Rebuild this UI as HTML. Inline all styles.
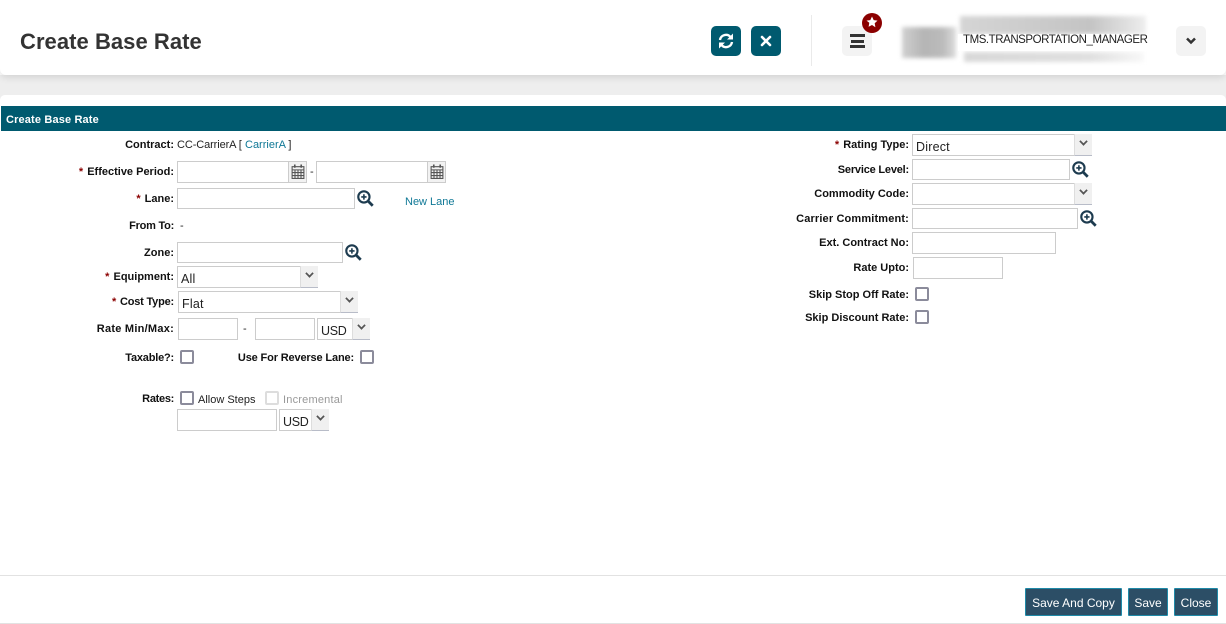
<!DOCTYPE html>
<html><head><meta charset="utf-8">
<style>
html,body{margin:0;padding:0;width:1226px;height:624px;overflow:hidden;background:#fff;font-family:"Liberation Sans",sans-serif;color:#222}
.a,.l,.t,.i,.s,.c,.btn,svg{position:absolute}
.hdr{left:0;top:0;width:1226px;height:75px;background:#fff;border-radius:0 0 6px 6px;box-shadow:0 2px 8px rgba(0,0,0,.13);z-index:2}
.l{font-weight:bold;font-size:11px;letter-spacing:0;color:#111;white-space:nowrap;line-height:14px;margin-top:1px}
.l b{color:#8b0000;margin-right:1px}
.t{font-size:11px;letter-spacing:0;color:#222;white-space:nowrap;line-height:14px;margin-top:1px}
.i,.s{box-sizing:border-box;border:1px solid #ccc;background:#fff;border-width:1px}
.s{font-size:12.5px;letter-spacing:.2px;color:#222;padding-left:3px;line-height:23px}
.s i{position:absolute;right:-1px;top:-1px;bottom:-1px;width:18px;background:#f0f0f0;border-left:1px solid #ddd;border-bottom:1px solid #b8bcc8;box-sizing:border-box}
.s i:after{content:"";position:absolute;left:5px;top:4px;width:5px;height:5px;border:solid #555;border-width:0 2px 2px 0;transform:rotate(45deg) scale(.85)}
.u{letter-spacing:-.3px}
.cal{position:absolute;right:0;top:0;bottom:0;width:17px;background:#f2f2f2;border-left:1px solid #ccc}
.c{box-sizing:border-box;width:14px;height:14px;border:2px solid #8b8b9b;border-radius:2px;background:#fff}
.sq{box-sizing:border-box;width:30px;height:30px;border-radius:5px;position:absolute;top:26px}
.btn{box-sizing:border-box;top:588px;height:28px;background:#2c4e66;border:1px solid #1f8aa8;color:#fff;font-size:12px;letter-spacing:0;line-height:28px;text-align:center;border-radius:1px}
a{color:#0f7896;text-decoration:none}
</style></head><body>
<div class="a" style="left:0;top:75px;width:1226px;height:30px;background:#eeeeee"></div>
<div class="a" style="left:0;top:95px;width:1226px;height:529px;background:#fff;border-radius:5px 5px 0 0"></div>
<div class="a hdr"></div>
<div class="a" style="left:1px;top:106px;width:1225px;height:25px;background:#005a6f"></div>
<div class="a" style="left:6px;top:113px;color:#fff;font-weight:bold;font-size:11px;letter-spacing:.15px;line-height:14px;z-index:3">Create Base Rate</div>

<div style="position:absolute;left:0;top:0;width:1226px;height:75px;z-index:3">
<div class="a" style="left:20px;top:28px;font-size:22px;font-weight:bold;color:#333;letter-spacing:.05px;line-height:28px;white-space:nowrap">Create Base Rate</div>
<div class="sq" style="left:711px;background:#005a6f"></div>
<svg style="left:717px;top:32px" width="18" height="18" viewBox="0 0 18 18" fill="none" stroke="#fff" stroke-width="2.400"><path d="M3 8a6 6 0 0 1 10.500-3L15 6.500"/><path d="M16 1.500v6h-6" fill="#fff" stroke="none"/><path d="M15 10a6 6 0 0 1-10.500 3L3 11.500"/><path d="M2 16.500v-6h6" fill="#fff" stroke="none"/></svg>
<div class="sq" style="left:751px;background:#005a6f"></div>
<svg style="left:760px;top:35px" width="12" height="12" viewBox="0 0 12 12" stroke="#fff" stroke-width="2.600" stroke-linecap="round"><path d="M2 2l8 8M10 2l-8 8"/></svg>
<div class="a" style="left:811px;top:15px;width:1px;height:51px;background:#eaeaea"></div>
<div class="sq" style="left:842px;background:#f3f3f3"></div>
<div class="a" style="left:850px;top:34px;width:15px;height:3px;background:#333"></div>
<div class="a" style="left:851px;top:40px;width:13px;height:3px;background:#333"></div>
<div class="a" style="left:850px;top:45px;width:15px;height:3px;background:#333"></div>
<div class="a" style="left:862px;top:13px;width:20px;height:20px;border-radius:50%;background:#8b0000"></div>
<svg style="left:866px;top:16px" width="12" height="12" viewBox="0 0 24 24"><path fill="#fff" d="M12 1l3.400 7.200 7.600 1-5.600 5.400 1.400 7.800L12 18l-6.800 3.400 1.400-7.800L1 9.200l7.600-1z"/></svg>
<div class="a" style="left:902px;top:27px;width:54px;height:31px;background:linear-gradient(90deg,#d0d0d0,#b5b5b5 40%,#bbb 75%,#dcdcdc);filter:blur(2px)"></div>
<div class="a" style="left:960px;top:16px;width:186px;height:18px;background:linear-gradient(90deg,#d5d5d5,#c4c4c4 70%,#eee);filter:blur(2px)"></div>
<div class="a" style="left:964px;top:52px;width:180px;height:10px;background:linear-gradient(90deg,#d8d8d8,#e0e0e0 70%,#f8f8f8);filter:blur(2px)"></div>
<div class="a" style="left:958px;top:34px;width:195px;height:17px;background:#fff"></div>
<div class="a" style="left:963px;top:33px;font-size:11.5px;letter-spacing:-.45px;line-height:14px;color:#222;white-space:nowrap">TMS.TRANSPORTATION_MANAGER</div>
<div class="sq" style="left:1176px;background:#f3f3f3"></div>
<svg style="left:1185px;top:37px" width="12" height="8" viewBox="0 0 12 8" fill="none" stroke="#333" stroke-width="2.500"><path d="M2 1.500l4 4 4-4"/></svg>
</div>

<!-- left labels -->
<div class="l" style="right:1052px;top:137px">Contract:</div>
<div class="t" style="left:177px;top:137px;letter-spacing:-.1px">CC-CarrierA [</div>
<div class="t" style="left:245px;top:137px"><a>CarrierA</a> ]</div>
<div class="l" style="right:1052px;top:164px"><b>*</b> Effective Period:</div>
<div class="i" style="left:177px;top:161px;width:130px;height:22px"><span class="cal"></span></div>
<svg style="left:291px;top:164px" width="14" height="15" viewBox="0 0 13 14" fill="none" stroke="#555"><path d="M1 2.500h11v11H1zM1 5.500h11M1 8h11M1 10.800h11M3.700 5.500v8M6.500 5.500v8M9.300 5.500v8"/><path d="M3.500 .5v3M9.500 .5v3" stroke-width="1.500"/></svg>
<div class="t" style="left:310px;top:164px">-</div>
<div class="i" style="left:316px;top:161px;width:130px;height:22px"><span class="cal"></span></div>
<svg style="left:430px;top:164px" width="14" height="15" viewBox="0 0 13 14" fill="none" stroke="#555"><path d="M1 2.500h11v11H1zM1 5.500h11M1 8h11M1 10.800h11M3.700 5.500v8M6.500 5.500v8M9.300 5.500v8"/><path d="M3.500 .5v3M9.500 .5v3" stroke-width="1.500"/></svg>

<div class="l" style="right:1052px;top:191px"><b>*</b> Lane:</div>
<div class="i" style="left:177px;top:188px;width:178px;height:21px"></div>
<svg style="left:357px;top:190px" width="17" height="17" viewBox="0 0 16 16" fill="none" stroke="#1d3b4f"><circle cx="6.500" cy="6.500" r="5.300" stroke-width="2"/><path d="M10.500 10.500l4.300 4.300" stroke-width="2.600"/><path d="M6.500 4v5M4 6.500h5" stroke-width="1.500"/></svg>
<div class="t" style="left:405px;top:194px"><a>New Lane</a></div>

<div class="l" style="right:1052px;top:218px;letter-spacing:-.25px">From To:</div>
<div class="t" style="left:180px;top:218px">-</div>

<div class="l" style="right:1052px;top:245px">Zone:</div>
<div class="i" style="left:177px;top:242px;width:166px;height:21px"></div>
<svg style="left:345px;top:244px" width="17" height="17" viewBox="0 0 16 16" fill="none" stroke="#1d3b4f"><circle cx="6.500" cy="6.500" r="5.300" stroke-width="2"/><path d="M10.500 10.500l4.300 4.300" stroke-width="2.600"/><path d="M6.500 4v5M4 6.500h5" stroke-width="1.500"/></svg>

<div class="l" style="right:1052px;top:269px"><b>*</b> Equipment:</div>
<div class="s" style="left:177px;top:266px;width:141px;height:22px;line-height:24px">All<i></i></div>
<div class="l" style="right:1052px;top:294px;letter-spacing:-.2px"><b>*</b> Cost Type:</div>
<div class="s" style="left:178px;top:291px;width:180px;height:22px;line-height:24px">Flat<i></i></div>
<div class="l" style="right:1052px;top:321px;letter-spacing:.25px">Rate Min/Max:</div>
<div class="i" style="left:178px;top:318px;width:60px;height:22px"></div>
<div class="t" style="left:243px;top:321px">-</div>
<div class="i" style="left:255px;top:318px;width:60px;height:22px"></div>
<div class="s u" style="left:317px;top:318px;width:53px;height:22px;line-height:24px">USD<i></i></div>

<div class="l" style="right:1052px;top:350px;letter-spacing:-.2px">Taxable?:</div>
<div class="c" style="left:180px;top:350px"></div>
<div class="l" style="right:872px;top:350px;letter-spacing:-.15px">Use For Reverse Lane:</div>
<div class="c" style="left:360px;top:350px"></div>

<div class="l" style="right:1052px;top:391px;letter-spacing:-.3px">Rates:</div>
<div class="c" style="left:180px;top:391px"></div>
<div class="t" style="left:198px;top:392px">Allow Steps</div>
<div class="c" style="left:265px;top:391px;border-color:#ddd"></div>
<div class="t" style="left:283px;top:392px;color:#999;letter-spacing:.2px">Incremental</div>
<div class="i" style="left:177px;top:409px;width:100px;height:22px"></div>
<div class="s u" style="left:279px;top:409px;width:50px;height:22px;line-height:24px">USD<i></i></div>

<!-- right -->
<div class="l" style="right:317px;top:137px"><b>*</b> Rating Type:</div>
<div class="s" style="left:912px;top:134px;width:180px;height:22px;line-height:24px">Direct<i></i></div>
<div class="l" style="right:317px;top:162px;letter-spacing:-.2px">Service Level:</div>
<div class="i" style="left:912px;top:159px;width:158px;height:21px"></div>
<svg style="left:1072px;top:161px" width="17" height="17" viewBox="0 0 16 16" fill="none" stroke="#1d3b4f"><circle cx="6.500" cy="6.500" r="5.300" stroke-width="2"/><path d="M10.500 10.500l4.300 4.300" stroke-width="2.600"/><path d="M6.500 4v5M4 6.500h5" stroke-width="1.500"/></svg>
<div class="l" style="right:317px;top:186px">Commodity Code:</div>
<div class="s" style="left:912px;top:183px;width:180px;height:22px"><i></i></div>
<div class="l" style="right:317px;top:211px;letter-spacing:.15px">Carrier Commitment:</div>
<div class="i" style="left:912px;top:208px;width:166px;height:21px"></div>
<svg style="left:1080px;top:210px" width="17" height="17" viewBox="0 0 16 16" fill="none" stroke="#1d3b4f"><circle cx="6.500" cy="6.500" r="5.300" stroke-width="2"/><path d="M10.500 10.500l4.300 4.300" stroke-width="2.600"/><path d="M6.500 4v5M4 6.500h5" stroke-width="1.500"/></svg>
<div class="l" style="right:317px;top:235px">Ext. Contract No:</div>
<div class="i" style="left:912px;top:232px;width:144px;height:22px"></div>
<div class="l" style="right:317px;top:260px">Rate Upto:</div>
<div class="i" style="left:913px;top:257px;width:90px;height:22px"></div>
<div class="l" style="right:317px;top:287px">Skip Stop Off Rate:</div>
<div class="c" style="left:915px;top:287px"></div>
<div class="l" style="right:317px;top:310px">Skip Discount Rate:</div>
<div class="c" style="left:915px;top:310px"></div>

<!-- footer -->
<div class="a" style="left:0;top:575px;width:1226px;height:1px;background:#e2e2e2"></div>
<div class="a" style="left:0;top:623px;width:1226px;height:1px;background:#e2e2e2"></div>
<div class="btn" style="left:1025px;width:97px">Save And Copy</div>
<div class="btn" style="left:1128px;width:40px">Save</div>
<div class="btn" style="left:1174px;width:44px">Close</div>
</body></html>
